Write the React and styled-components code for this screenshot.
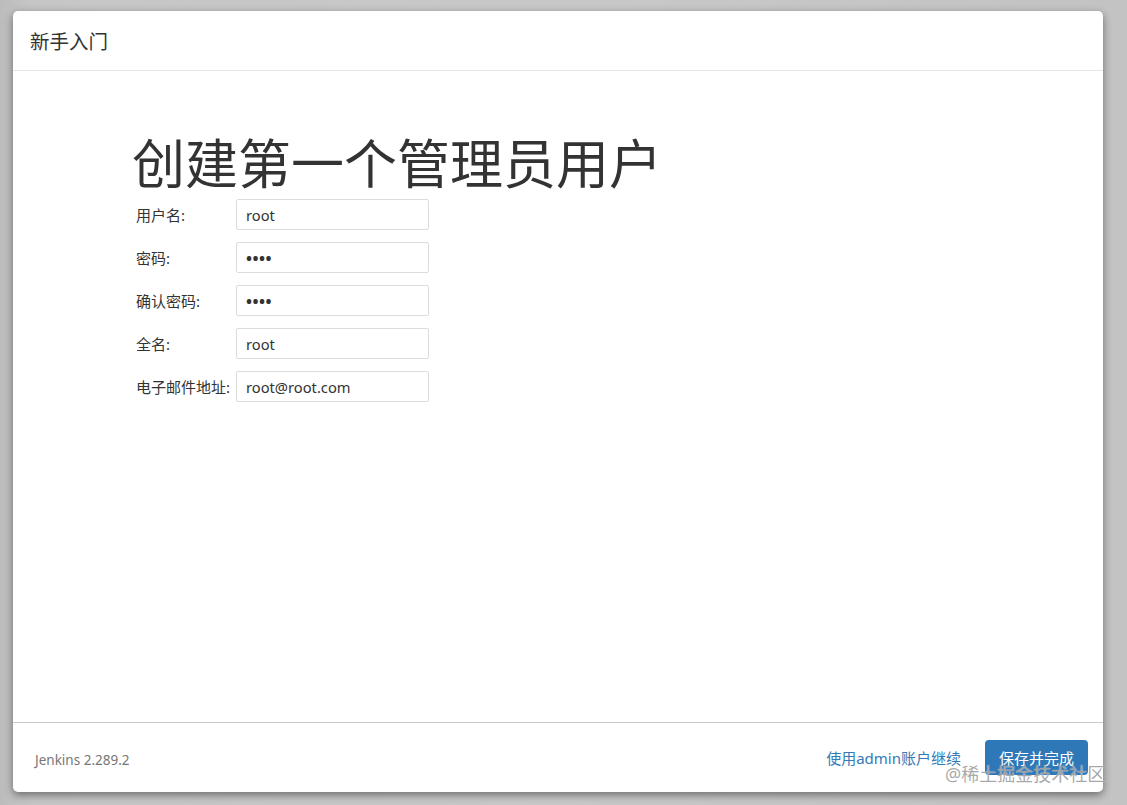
import React from 'react';
import styled, { createGlobalStyle } from 'styled-components';

const GlobalStyle = createGlobalStyle`
    html, body {
        margin: 0;
        padding: 0;
        background: #c4c4c4;
    }
    body {
        font-family: "Noto Sans", "Noto Sans CJK SC", sans-serif;
        color: #333;
    }
`;

const Page = styled.div`
    box-sizing: border-box;
    width: 1127px;
    height: 805px;
    padding: 11px 24px 13px 13px;
    background: linear-gradient(to right, #bcbcbc 0, #c6c6c6 3%, #c8c8c8 50%, #c3c3c3 100%);
    position: relative;
`;

const Dialog = styled.div`
    height: 100%;
    display: flex;
    flex-direction: column;
    background: #fff;
    border-radius: 5px;
    box-shadow: 0 3px 9px rgba(0, 0, 0, 0.45);
`;

const Header = styled.div`
    height: 59px;
    display: flex;
    align-items: center;
    padding-left: 17px;
    border-bottom: 1px solid #e5e5e5;
    font-size: 19.5px;
    color: #333;
`;

const Body = styled.div`
    flex: 1;
    padding: 63px 0 0 123px;
`;

const Heading = styled.h1`
    margin: 0 0 5px -4px;
    font-size: 53px;
    font-weight: 400;
    line-height: 60px;
    color: #333;
`;

const Form = styled.div`
    display: grid;
    grid-template-columns: 100px 193px;
    grid-auto-rows: 31px;
    row-gap: 12px;
    align-items: center;
`;

const Label = styled.label`
    font-size: 15px;
    color: #333;
    white-space: nowrap;
`;

const Field = styled.input`
    box-sizing: border-box;
    width: 193px;
    height: 31px;
    padding: 0 9px;
    border: 1px solid #dcdcdc;
    border-radius: 2px;
    font-family: "Noto Sans", "Noto Sans CJK SC", sans-serif;
    font-size: ${p => (p.type === 'password' ? '16px' : '14.7px')};
    font-weight: ${p => (p.type === 'password' ? 700 : 400)};
    color: #333;
    outline: none;
    letter-spacing: ${p => (p.type === 'password' ? '0.5px' : 'normal')};
`;

const Footer = styled.div`
    height: 69px;
    display: flex;
    align-items: center;
    padding: 0 15px 0 22px;
    border-top: 1px solid #c9c9c9;
`;

const Version = styled.span`
    font-size: 13.5px;
    color: #777;
    flex: 1;
    padding-top: 4px;
`;

const Link = styled.a`
    font-size: 15px;
    color: #337ab7;
    text-decoration: none;
    margin-right: 24px;
`;

const Button = styled.button`
    height: 35px;
    padding: 0 14px;
    border: none;
    border-radius: 4px;
    background: #2f78b7;
    color: #fff;
    font-family: "Noto Sans", "Noto Sans CJK SC", sans-serif;
    font-size: 15px;
`;

const Watermark = styled.div`
    position: absolute;
    left: 945px;
    top: 760px;
    font-size: 18px;
    color: rgba(140, 140, 140, 0.75);
    text-shadow: 0 0 1px rgba(255, 255, 255, 0.9);
    white-space: nowrap;
    pointer-events: none;
`;

const fields = [
    { label: '用户名:', type: 'text', value: 'root' },
    { label: '密码:', type: 'password', value: 'root' },
    { label: '确认密码:', type: 'password', value: 'root' },
    { label: '全名:', type: 'text', value: 'root' },
    { label: '电子邮件地址:', type: 'text', value: 'root@root.com' },
];

const App = () => {
    return <>
        <GlobalStyle />
        <Page>
            <Dialog>
                <Header>新手入门</Header>
                <Body>
                    <Heading>创建第一个管理员用户</Heading>
                    <Form>
                        {fields.map(f => (
                            <React.Fragment key={f.label}>
                                <Label>{f.label}</Label>
                                <Field type={f.type} defaultValue={f.value} />
                            </React.Fragment>
                        ))}
                    </Form>
                </Body>
                <Footer>
                    <Version>Jenkins 2.289.2</Version>
                    <Link href="#">使用admin账户继续</Link>
                    <Button>保存并完成</Button>
                </Footer>
            </Dialog>
            <Watermark>@稀土掘金技术社区</Watermark>
        </Page>
    </>
}

export default App;
